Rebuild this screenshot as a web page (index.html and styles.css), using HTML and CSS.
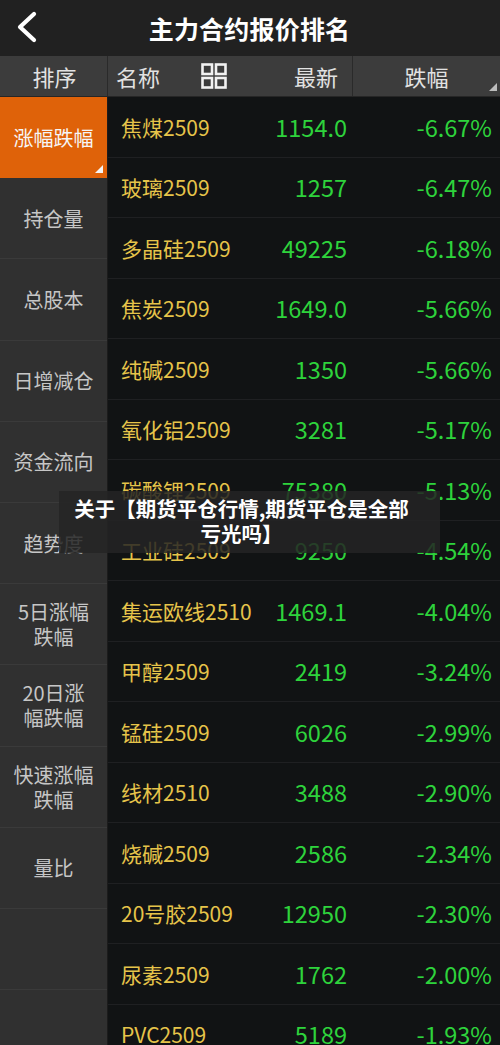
FILE: index.html
```html
<!DOCTYPE html>
<html lang="zh-CN">
<head>
<meta charset="utf-8">
<title>主力合约报价排名</title>
<link rel="stylesheet" href="styles.css">
</head>
<body>
<div class="app">
  <header class="topbar">
    <svg class="back" width="26" height="32" viewBox="0 0 26 32"><polyline points="20,3 6,16 20,29" fill="none" stroke="#fff" stroke-width="4.2" stroke-linecap="round" stroke-linejoin="round"/></svg>
    <h1 class="title">主力合约报价排名</h1>
  </header>
  <div class="colhead">
    <div class="ch-sort">排序</div>
    <div class="ch-main">
      <span>名称</span>
      <svg class="grid-icon" width="26" height="26" viewBox="0 0 26 26">
        <rect x="1.5" y="1.5" width="9.5" height="9.5" fill="none" stroke="#f2f2f2" stroke-width="2.6"/>
        <rect x="15" y="1.5" width="9.5" height="9.5" fill="none" stroke="#f2f2f2" stroke-width="2.6"/>
        <rect x="1.5" y="15" width="9.5" height="9.5" fill="none" stroke="#f2f2f2" stroke-width="2.6"/>
        <rect x="15" y="15" width="9.5" height="9.5" fill="none" stroke="#f2f2f2" stroke-width="2.6"/>
      </svg>
      <span class="ch-last">最新</span>
    </div>
    <div class="ch-pct">跌幅<span class="tri tri-gray"></span></div>
  </div>
  <div class="main">
    <nav class="sidebar">
      <div class="side-item active">涨幅跌幅<span class="tri tri-white"></span></div>
      <div class="side-item">持仓量</div>
      <div class="side-item">总股本</div>
      <div class="side-item">日增减仓</div>
      <div class="side-item">资金流向</div>
      <div class="side-item">趋势度</div>
      <div class="side-item">5日涨幅<br>跌幅</div>
      <div class="side-item">20日涨<br>幅跌幅</div>
      <div class="side-item">快速涨幅<br>跌幅</div>
      <div class="side-item">量比</div>
      <div class="side-item"></div>
      <div class="side-item"></div>
    </nav>
    <div class="list">
      <div class="row"><span class="name">焦煤2509</span><span class="num">1154.0</span><span class="num">-6.67%</span></div>
      <div class="row"><span class="name">玻璃2509</span><span class="num">1257</span><span class="num">-6.47%</span></div>
      <div class="row"><span class="name">多晶硅2509</span><span class="num">49225</span><span class="num">-6.18%</span></div>
      <div class="row"><span class="name">焦炭2509</span><span class="num">1649.0</span><span class="num">-5.66%</span></div>
      <div class="row"><span class="name">纯碱2509</span><span class="num">1350</span><span class="num">-5.66%</span></div>
      <div class="row"><span class="name">氧化铝2509</span><span class="num">3281</span><span class="num">-5.17%</span></div>
      <div class="row"><span class="name">碳酸锂2509</span><span class="num">75380</span><span class="num">-5.13%</span></div>
      <div class="row"><span class="name">工业硅2509</span><span class="num">9250</span><span class="num">-4.54%</span></div>
      <div class="row"><span class="name">集运欧线2510</span><span class="num">1469.1</span><span class="num">-4.04%</span></div>
      <div class="row"><span class="name">甲醇2509</span><span class="num">2419</span><span class="num">-3.24%</span></div>
      <div class="row"><span class="name">锰硅2509</span><span class="num">6026</span><span class="num">-2.99%</span></div>
      <div class="row"><span class="name">线材2510</span><span class="num">3488</span><span class="num">-2.90%</span></div>
      <div class="row"><span class="name">烧碱2509</span><span class="num">2586</span><span class="num">-2.34%</span></div>
      <div class="row"><span class="name">20号胶2509</span><span class="num">12950</span><span class="num">-2.30%</span></div>
      <div class="row"><span class="name">尿素2509</span><span class="num">1762</span><span class="num">-2.00%</span></div>
      <div class="row"><span class="name">PVC2509</span><span class="num">5189</span><span class="num">-1.93%</span></div>
    </div>
  </div>
  <div class="overlay">关于【期货平仓行情,期货平仓是全部<br>亏光吗】</div>
</div>
</body>
</html>
```
FILE: styles.css
```css
* { box-sizing: border-box; }
html, body { margin: 0; padding: 0; background: #111314; }
body {
  width: 500px;
  height: 1045px;
  overflow: hidden;
  font-family: "Noto Sans CJK SC", "Noto Sans", sans-serif;
}
.app { position: relative; width: 500px; height: 1045px; overflow: hidden; }

.topbar {
  height: 56px;
  background: #212121;
  display: flex;
  align-items: center;
  justify-content: center;
  position: relative;
}
.back { position: absolute; left: 14px; top: 11px; }
.title {
  margin: 0;
  color: #fff;
  font-size: 25px;
  font-weight: 700;
  letter-spacing: 0.2px;
  line-height: 1;
  margin-left: -1px;
}

.colhead {
  height: 41px;
  display: flex;
  background: #3c3c3c;
  border-bottom: 1px solid #262626;
  color: #e2e2e2;
  font-size: 22px;
  line-height: 40px;
}
.ch-sort {
  width: 108px;
  text-align: center;
  border-right: 1px solid #2a2a2a;
  padding-left: 2px;
}
.ch-main {
  width: 245px;
  display: flex;
  align-items: center;
  padding-left: 8px;
  padding-right: 14px;
  border-right: 1px solid #2a2a2a;
}
.grid-icon { margin-left: 41px; }
.ch-last { margin-left: auto; }
.ch-pct {
  flex: 1;
  text-align: center;
  position: relative;
}
.tri {
  position: absolute;
  width: 0;
  height: 0;
  border-style: solid;
}
.tri-gray {
  right: 3px;
  bottom: 5px;
  border-width: 0 0 8px 8px;
  border-color: transparent transparent #bdbdbd transparent;
}
.tri-white {
  right: 4px;
  bottom: 4px;
  border-width: 0 0 8px 8px;
  border-color: transparent transparent #f4f4f4 transparent;
}

.main { display: flex; }
.sidebar {
  width: 108px;
  flex: none;
  background: #303030;
  border-right: 1px solid #1c1c1c;
}
.side-item {
  position: relative;
  height: 81.2px;
  border-bottom: 1px solid #3a3a3a;
  display: flex;
  align-items: center;
  justify-content: center;
  text-align: center;
  color: #c6c6c6;
  font-size: 20px;
  line-height: 25px;
}
.side-item.active {
  background: #df6209;
  color: #f6f6f6;
  border-bottom-color: #df6209;
}

.list { flex: 1; min-width: 0; }
.row {
  height: 60.5px;
  display: grid;
  grid-template-columns: minmax(0, 1fr) 110px 145px;
  align-items: center;
  padding-left: 13px;
  padding-right: 8px;
  border-bottom: 1px solid #1f2022;
}
.name {
  color: #e6c44a;
  font-size: 21px;
  white-space: nowrap;
}
.num {
  color: #2ed33c;
  font-size: 23.5px;
  text-align: right;
  white-space: nowrap;
}

.overlay {
  position: absolute;
  left: 59px;
  top: 491px;
  width: 381px;
  height: 62px;
  background: rgba(36, 36, 36, 0.85);
  color: #fff;
  font-size: 20.5px;
  font-weight: 700;
  line-height: 25px;
  text-align: center;
  white-space: nowrap;
  padding: 5px 24px 0 8px;
}
```
